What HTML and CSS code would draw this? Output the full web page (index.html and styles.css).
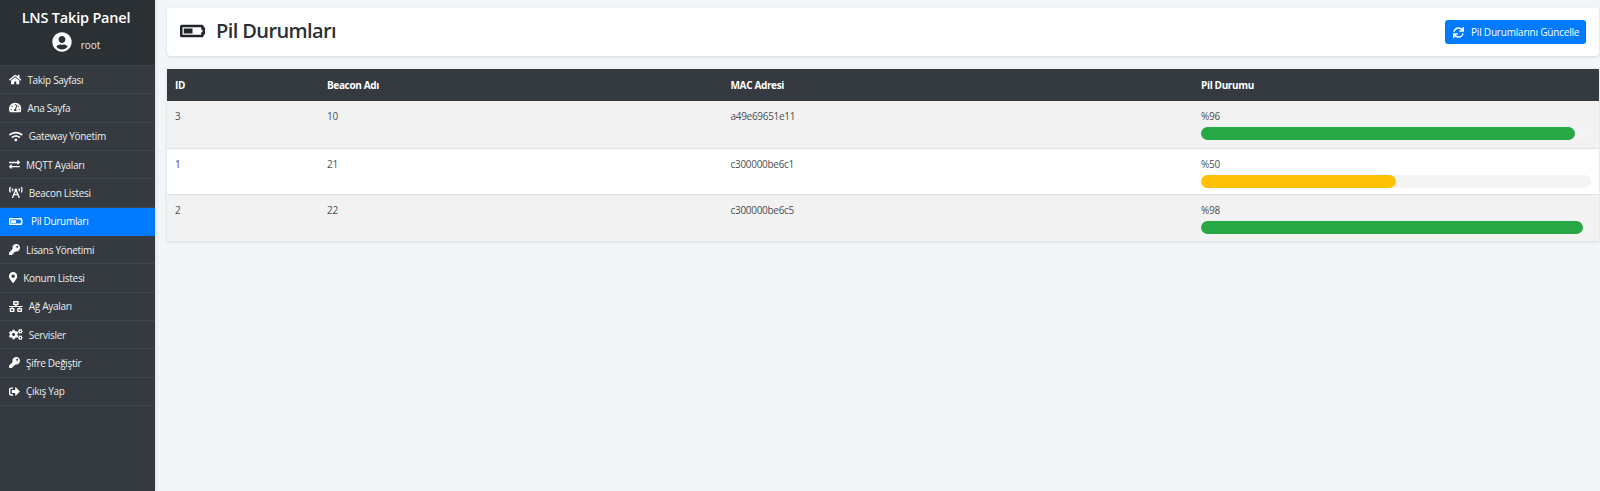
FILE: index.html
```html
<!DOCTYPE html>
<html lang="tr">
<head>
<meta charset="utf-8">
<title>Pil Durumları</title>
<link rel="stylesheet" href="styles.css">
</head>
<body>
<svg class="sprite" aria-hidden="true">
<symbol id="i-user" viewBox="0 0 496 512"><path d="M248 8C111 8 0 119 0 256s111 248 248 248 248-111 248-248S385 8 248 8zm0 96c48.6 0 88 39.4 88 88s-39.4 88-88 88-88-39.4-88-88 39.4-88 88-88zm0 344c-58.7 0-111.3-26.6-146.5-68.2 18.8-35.4 55.6-59.8 98.5-59.8 2.4 0 4.8.4 7.1 1.1 13 4.2 26.6 6.9 40.9 6.9 14.3 0 28-2.7 40.9-6.9 2.3-.7 4.7-1.1 7.1-1.1 42.9 0 79.7 24.4 98.5 59.8C359.3 421.4 306.7 448 248 448z"/></symbol>
<symbol id="i-sync" viewBox="0 0 512 512"><path d="M440.65 12.57l4 82.77A247.16 247.16 0 0 0 255.83 8C134.73 8 33.91 94.92 12.29 209.82A12 12 0 0 0 24.09 224h49.05a12 12 0 0 0 11.67-9.26 175.91 175.91 0 0 1 317-56.94l-101.46-4.86a12 12 0 0 0-12.57 12v47.41a12 12 0 0 0 12 12H500a12 12 0 0 0 12-12V12a12 12 0 0 0-12-12h-47.37a12 12 0 0 0-11.98 12.57zM255.83 432a175.61 175.61 0 0 1-146-77.8l101.8 4.87a12 12 0 0 0 12.57-12v-47.4a12 12 0 0 0-12-12H12a12 12 0 0 0-12 12V500a12 12 0 0 0 12 12h47.35a12 12 0 0 0 12-12.6l-4.15-82.57A247.17 247.17 0 0 0 255.83 504c121.11 0 221.93-86.92 243.55-201.82a12 12 0 0 0-11.8-14.18h-49.05a12 12 0 0 0-11.67 9.26A175.86 175.86 0 0 1 255.83 432z"/></symbol>
<symbol id="i-home" viewBox="0 0 576 512"><path d="M280.37 148.26L96 300.11V464a16 16 0 0 0 16 16l112.06-.29a16 16 0 0 0 15.92-16V368a16 16 0 0 1 16-16h64a16 16 0 0 1 16 16v95.64a16 16 0 0 0 16 16.05L464 480a16 16 0 0 0 16-16V300L295.67 148.26a12.19 12.19 0 0 0-15.3 0zM571.6 251.47L488 182.56V44.05a12 12 0 0 0-12-12h-56a12 12 0 0 0-12 12v72.61L318.47 43a48 48 0 0 0-61 0L4.34 251.47a12 12 0 0 0-1.6 16.9l25.5 31A12 12 0 0 0 45.15 301l235.22-193.74a12.19 12.19 0 0 1 15.3 0L530.9 301a12 12 0 0 0 16.9-1.6l25.5-31a12 12 0 0 0-1.7-16.93z"/></symbol>
<symbol id="i-gauge" viewBox="0 0 576 512"><path d="M288 32C128.94 32 0 160.94 0 320c0 52.8 14.25 102.26 39.06 144.8 5.61 9.62 16.3 15.2 27.44 15.2h443c11.14 0 21.83-5.58 27.44-15.2C561.75 422.26 576 372.8 576 320c0-159.06-128.94-288-288-288zm0 64c14.71 0 26.58 10.13 30.32 23.65-1.11 2.26-2.64 4.23-3.45 6.67l-9.22 27.67c-5.13 3.49-10.97 6.01-17.64 6.01-17.67 0-32-14.33-32-32S270.33 96 288 96zM96 384c-17.67 0-32-14.33-32-32s14.33-32 32-32 32 14.33 32 32-14.33 32-32 32zm48-160c-17.67 0-32-14.33-32-32s14.33-32 32-32 32 14.33 32 32-14.33 32-32 32zm246.77-72.41l-61.33 184C343.13 347.33 352 364.54 352 384c0 11.72-3.38 22.55-8.88 32H232.88c-5.5-9.45-8.88-20.28-8.88-32 0-33.94 26.5-61.43 59.9-63.59l61.34-184.01c4.17-12.56 17.73-19.45 30.36-15.17 12.57 4.19 19.35 17.79 15.17 30.36zm14.66 57.2l15.52-46.55c3.47-1.29 7.13-2.23 11.05-2.23 17.67 0 32 14.33 32 32s-14.33 32-32 32c-11.38-.01-20.89-6.28-26.57-15.22zM480 384c-17.67 0-32-14.33-32-32s14.33-32 32-32 32 14.33 32 32-14.33 32-32 32z"/></symbol>
<symbol id="i-wifi" viewBox="0 0 640 512"><path d="M634.91 154.88C457.74-8.99 182.19-8.93 5.09 154.88c-6.66 6.16-6.79 16.59-.35 22.98l34.24 33.97c6.14 6.1 16.02 6.23 22.4.38 145.92-133.68 371.3-133.71 517.25 0 6.38 5.85 16.26 5.71 22.4-.38l34.24-33.97c6.43-6.39 6.3-16.82-.36-22.98zM320 352c-35.35 0-64 28.65-64 64s28.65 64 64 64 64-28.65 64-64-28.65-64-64-64zm202.67-83.59c-115.26-101.93-290.21-101.82-405.34 0-6.9 6.1-7.12 16.69-.57 23.15l34.44 33.99c6 5.92 15.66 6.32 22.05.8 83.95-72.57 209.74-72.41 293.49 0 6.39 5.52 16.05 5.13 22.05-.8l34.44-33.99c6.56-6.46 6.33-17.06-.56-23.15z"/></symbol>
<symbol id="i-exchange" viewBox="0 0 512 512"><path d="M0 168v-16c0-13.255 10.745-24 24-24h360V80c0-21.367 25.899-32.042 40.971-16.971l80 80c9.372 9.373 9.372 24.569 0 33.941l-80 80C409.956 271.982 384 261.456 384 240v-48H24c-13.255 0-24-10.745-24-24zm488 152H128v-48c0-21.314-25.862-32.08-40.971-16.971l-80 80c-9.372 9.373-9.372 24.569 0 33.941l80 80C102.057 463.997 128 453.437 128 432v-48h360c13.255 0 24-10.745 24-24v-16c0-13.255-10.745-24-24-24z"/></symbol>
<symbol id="i-tower" viewBox="0 0 640 512"><path d="M150.94 192h33.73c11.01 0 18.61-10.83 14.86-21.18-4.93-13.58-7.55-27.98-7.55-42.82s2.62-29.24 7.55-42.82C203.29 74.83 195.68 64 184.67 64h-33.73c-7.01 0-13.46 4.49-15.41 11.23C130.64 92.21 128 109.88 128 128c0 18.12 2.64 35.79 7.54 52.76 1.94 6.74 8.39 11.24 15.4 11.24zM89.92 23.34C95.56 12.72 87.97 0 75.96 0H40.63c-6.27 0-12.14 3.59-14.74 9.31C9.4 45.54 0 85.65 0 128c0 24.75 3.12 68.33 26.69 118.86 2.62 5.63 8.42 9.14 14.61 9.14h34.84c12.02 0 19.61-12.74 13.95-23.37-49.78-93.32-16.71-178.15-.17-209.29zM614.06 9.29C611.46 3.58 605.6 0 599.33 0h-35.42c-11.98 0-19.66 12.66-14.02 23.25 18.27 34.29 48.42 119.42.28 209.23-5.72 10.68 1.8 23.52 13.91 23.52h35.23c6.27 0 12.13-3.58 14.73-9.29C630.57 210.48 640 170.36 640 128s-9.42-82.48-25.94-118.71zM489.06 64h-33.73c-11.01 0-18.61 10.83-14.86 21.18 4.93 13.58 7.55 27.98 7.55 42.82s-2.62 29.24-7.55 42.82c-3.76 10.35 3.85 21.18 14.86 21.18h33.73c7.02 0 13.46-4.49 15.41-11.24 4.9-16.97 7.53-34.64 7.53-52.76 0-18.12-2.64-35.79-7.54-52.76-1.94-6.75-8.39-11.24-15.4-11.24zm-116.3 100.12c7.05-10.29 11.2-22.71 11.2-36.12 0-35.35-28.63-64-63.96-64-35.32 0-63.96 28.65-63.96 64 0 13.41 4.15 25.83 11.2 36.12l-130.5 313.41c-3.4 8.15.46 17.52 8.61 20.92l29.51 12.31c8.15 3.4 17.52-.46 20.91-8.61L244.96 384h150.07l49.2 118.15c3.4 8.16 12.76 12.01 20.91 8.61l29.51-12.31c8.15-3.4 12-12.77 8.61-20.92l-130.5-313.41zM271.62 320L320 203.81 368.38 320h-96.76z"/></symbol>
<symbol id="i-battery" viewBox="0 0 640 512"><path d="M544 160v64h32v64h-32v64H64V160h480m16-64H48c-26.51 0-48 21.49-48 48v224c0 26.51 21.49 48 48 48h512c26.51 0 48-21.49 48-48v-16h8c13.255 0 24-10.745 24-24V184c0-13.255-10.745-24-24-24h-8v-16c0-26.51-21.49-48-48-48zm-240 96H96v128h224V192z"/></symbol>
<symbol id="i-key" viewBox="0 0 512 512"><path d="M512 176.001C512 273.203 433.202 352 336 352c-11.22 0-22.19-1.062-32.827-3.069l-24.012 27.014A23.999 23.999 0 0 1 261.223 384H224v40c0 13.255-10.745 24-24 24h-40v40c0 13.255-10.745 24-24 24H24c-13.255 0-24-10.745-24-24v-78.059c0-6.365 2.529-12.47 7.029-16.971l161.802-161.802C163.108 213.814 160 195.271 160 176 160 78.798 238.797.001 335.999 0 433.488-.001 512 78.511 512 176.001zM336 128c0 26.51 21.49 48 48 48s48-21.49 48-48-21.49-48-48-48-48 21.49-48 48z"/></symbol>
<symbol id="i-marker" viewBox="0 0 384 512"><path d="M172.268 501.67C26.97 291.031 0 268.413 0 192 0 85.961 85.961 0 192 0s192 85.961 192 192c0 76.413-26.97 99.031-172.268 309.67-9.535 13.774-29.93 13.773-39.464 0zM192 272c44.183 0 80-35.817 80-80s-35.817-80-80-80-80 35.817-80 80 35.817 80 80 80z"/></symbol>
<symbol id="i-network" viewBox="0 0 640 512"><path d="M640 264v-16c0-8.84-7.16-16-16-16H344v-40h72c17.67 0 32-14.33 32-32V32c0-17.67-14.33-32-32-32H224c-17.67 0-32 14.33-32 32v128c0 17.67 14.33 32 32 32h72v40H16c-8.84 0-16 7.16-16 16v16c0 8.84 7.16 16 16 16h104v40H64c-17.67 0-32 14.33-32 32v128c0 17.67 14.33 32 32 32h160c17.67 0 32-14.33 32-32V352c0-17.67-14.33-32-32-32h-56v-40h304v40h-56c-17.67 0-32 14.33-32 32v128c0 17.67 14.33 32 32 32h160c17.67 0 32-14.33 32-32V352c0-17.67-14.33-32-32-32h-56v-40h104c8.84 0 16-7.16 16-16zM256 128V64h128v64H256zm-64 320H96v-64h96v64zm352 0h-96v-64h96v64z"/></symbol>
<symbol id="i-cogs" viewBox="0 0 640 512"><path d="M512.1 191l-8.2 14.3c-3 5.3-9.4 7.5-15.1 5.4-11.8-4.4-22.6-10.7-32.1-18.6-4.6-3.8-5.8-10.5-2.8-15.7l8.2-14.3c-6.9-8-12.3-17.3-15.9-27.4h-16.5c-6 0-11.2-4.3-12.2-10.3-2-12-2.1-24.6 0-37.1 1-6 6.2-10.4 12.2-10.4h16.5c3.6-10.1 9-19.4 15.9-27.4l-8.2-14.3c-3-5.2-1.9-11.9 2.8-15.7 9.5-7.9 20.4-14.2 32.1-18.6 5.7-2.1 12.1.1 15.1 5.4l8.2 14.3c10.5-1.9 21.2-1.9 31.7 0L552 6.3c3-5.3 9.4-7.5 15.1-5.4 11.8 4.4 22.6 10.7 32.1 18.6 4.6 3.8 5.8 10.5 2.8 15.7l-8.2 14.3c6.9 8 12.3 17.3 15.9 27.4h16.5c6 0 11.2 4.3 12.2 10.3 2 12 2.1 24.6 0 37.1-1 6-6.2 10.4-12.2 10.4h-16.5c-3.6 10.1-9 19.4-15.9 27.4l8.2 14.3c3 5.2 1.9 11.9-2.8 15.7-9.5 7.9-20.4 14.2-32.1 18.6-5.7 2.1-12.1-.1-15.1-5.4l-8.2-14.3c-10.4 1.9-21.2 1.9-31.7 0zm-10.5-58.8c38.5 29.6 82.4-14.3 52.8-52.8-38.5-29.7-82.4 14.3-52.8 52.8zM386.3 286.1l33.7 16.8c10.1 5.8 14.5 18.1 10.5 29.1-8.9 24.2-26.4 46.4-42.6 65.8-7.4 8.9-20.2 11.1-30.3 5.3l-29.1-16.8c-16 13.7-34.6 24.6-54.9 31.7v33.6c0 11.6-8.3 21.6-19.7 23.6-24.6 4.2-50.4 4.4-75.9 0-11.5-2-20-11.9-20-23.6V418c-20.3-7.2-38.9-18-54.9-31.7L74 403c-10 5.8-22.9 3.6-30.3-5.3-16.2-19.4-33.3-41.6-42.2-65.7-4-10.9.4-23.2 10.5-29.1l33.3-16.8c-3.9-20.9-3.9-42.4 0-63.4L12 205.8c-10.1-5.8-14.6-18.1-10.5-29 8.9-24.2 26-46.4 42.2-65.8 7.4-8.9 20.2-11.1 30.3-5.3l29.1 16.8c16-13.7 34.6-24.6 54.9-31.7V57.1c0-11.5 8.2-21.5 19.6-23.5 24.6-4.2 50.5-4.4 76-.1 11.5 2 20 11.9 20 23.6v33.6c20.3 7.2 38.9 18 54.9 31.7l29.1-16.8c10-5.8 22.9-3.6 30.3 5.3 16.2 19.4 33.2 41.6 42.1 65.8 4 10.9.1 23.2-10 29.1l-33.7 16.8c3.9 21 3.9 42.5 0 63.5zm-117.6 21.1c59.2-77-28.7-164.9-105.7-105.7-59.2 77 28.7 164.9 105.7 105.7zm243.4 182.7l-8.2 14.3c-3 5.3-9.4 7.5-15.1 5.4-11.8-4.4-22.6-10.7-32.1-18.6-4.6-3.8-5.8-10.5-2.8-15.7l8.2-14.3c-6.9-8-12.3-17.3-15.9-27.4h-16.5c-6 0-11.2-4.3-12.2-10.3-2-12-2.1-24.6 0-37.1 1-6 6.2-10.4 12.2-10.4h16.5c3.6-10.1 9-19.4 15.9-27.4l-8.2-14.3c-3-5.2-1.9-11.9 2.8-15.7 9.5-7.9 20.4-14.2 32.1-18.6 5.7-2.1 12.1.1 15.1 5.4l8.2 14.3c10.5-1.9 21.2-1.9 31.7 0l8.2-14.3c3-5.3 9.4-7.5 15.1-5.4 11.8 4.4 22.6 10.7 32.1 18.6 4.6 3.8 5.8 10.5 2.8 15.7l-8.2 14.3c6.9 8 12.3 17.3 15.9 27.4h16.5c6 0 11.2 4.3 12.2 10.3 2 12 2.1 24.6 0 37.1-1 6-6.2 10.4-12.2 10.4h-16.5c-3.6 10.1-9 19.4-15.9 27.4l8.2 14.3c3 5.2 1.9 11.9-2.8 15.7-9.5 7.9-20.4 14.2-32.1 18.6-5.7 2.1-12.1-.1-15.1-5.4l-8.2-14.3c-10.4 1.9-21.2 1.9-31.7 0zM501.6 431c38.5 29.6 82.4-14.3 52.8-52.8-38.5-29.6-82.4 14.3-52.8 52.8z"/></symbol>
<symbol id="i-signout" viewBox="0 0 512 512"><path d="M497 273L329 441c-15 15-41 4.5-41-17v-96H152c-13.3 0-24-10.7-24-24v-96c0-13.3 10.7-24 24-24h136V88c0-21.4 25.9-32 41-17l168 168c9.3 9.4 9.3 24.6 0 34zM192 436v-40c0-6.6-5.4-12-12-12H96c-17.7 0-32-14.3-32-32V160c0-17.7 14.3-32 32-32h84c6.6 0 12-5.4 12-12V76c0-6.6-5.4-12-12-12H96c-53 0-96 43-96 96v192c0 53 43 96 96 96h84c6.6 0 12-5.4 12-12z"/></symbol>
</svg>
<div class="layout">
  <aside class="sidebar">
    <div class="brand">
      <div class="brand-title">LNS Takip Panel</div>
      <div class="brand-user">
        <svg class="user-icon"><use href="#i-user"/></svg>
        <span class="user-name">root</span>
      </div>
    </div>
    <nav class="menu">
      <a class="item"><svg class="ic w576"><use href="#i-home"/></svg><span>Takip Sayfası</span></a>
      <a class="item"><svg class="ic w576"><use href="#i-gauge"/></svg><span>Ana Sayfa</span></a>
      <a class="item"><svg class="ic w640"><use href="#i-wifi"/></svg><span>Gateway Yönetim</span></a>
      <a class="item"><svg class="ic w512"><use href="#i-exchange"/></svg><span>MQTT Ayaları</span></a>
      <a class="item"><svg class="ic w640"><use href="#i-tower"/></svg><span>Beacon Listesi</span></a>
      <a class="item active"><svg class="ic w640 gap-wide"><use href="#i-battery"/></svg><span>Pil Durumları</span></a>
      <a class="item"><svg class="ic w512"><use href="#i-key"/></svg><span>Lisans Yönetimi</span></a>
      <a class="item"><svg class="ic w384"><use href="#i-marker"/></svg><span>Konum Listesi</span></a>
      <a class="item"><svg class="ic w640"><use href="#i-network"/></svg><span>Ağ Ayaları</span></a>
      <a class="item"><svg class="ic w640"><use href="#i-cogs"/></svg><span>Servisler</span></a>
      <a class="item"><svg class="ic w512"><use href="#i-key"/></svg><span>Şifre Değiştir</span></a>
      <a class="item"><svg class="ic w512"><use href="#i-signout"/></svg><span>Çıkış Yap</span></a>
    </nav>
  </aside>
  <main class="content">
    <header class="page-head">
      <h1 class="page-title"><svg class="title-icon"><use href="#i-battery"/></svg><span>Pil Durumları</span></h1>
      <button class="btn"><svg class="btn-icon"><use href="#i-sync"/></svg><span>Pil Durumlarını Güncelle</span></button>
    </header>
    <table class="grid">
      <colgroup><col class="c1"><col class="c2"><col class="c3"><col class="c4"></colgroup>
      <thead>
        <tr><th>ID</th><th>Beacon Adı</th><th>MAC Adresi</th><th>Pil Durumu</th></tr>
      </thead>
      <tbody>
        <tr><td>3</td><td>10</td><td>a49e69651e11</td><td>%96<div class="track"><div class="fill green" style="width:96%"></div></div></td></tr>
        <tr><td>1</td><td>21</td><td>c300000be6c1</td><td>%50<div class="track"><div class="fill yellow" style="width:50%"></div></div></td></tr>
        <tr><td>2</td><td>22</td><td>c300000be6c5</td><td>%98<div class="track"><div class="fill green" style="width:98%"></div></div></td></tr>
      </tbody>
    </table>
  </main>
</div>
</body>
</html>
```
FILE: styles.css
```css
* { box-sizing: border-box; }
html, body { margin: 0; height: 100%; }
body {
  font-family: "Open Sans", "Noto Sans", "Liberation Sans", sans-serif;
  font-size: 10px;
  color: #212529;
  background: #f3f6f9;
  overflow: hidden;
}
.sprite { display: none; }
.layout { display: flex; height: 491px; }
.sidebar {
  flex: 0 0 155px;
  background: #343a40;
  color: #fff;
  box-shadow: 1px 0 3px rgba(0, 0, 0, .1);
}
.brand {
  height: 66px;
  background: #2b3035;
  padding: 8px 3px 0 0;
  text-align: center;
  border-bottom: 1px solid #3c4248;
}
.brand-title { font-size: 14.5px; font-weight: 600; line-height: 20px; letter-spacing: -.2px; }
.brand-user {
  display: flex;
  justify-content: center;
  align-items: center;
  gap: 9px;
  margin-top: 3px;
  font-size: 10px;
  color: #e6e8ea;
}
.user-name { padding-top: 7px; }
.user-icon { width: 20px; height: 20px; fill: #fff; }
.item {
  display: flex;
  align-items: center;
  height: 28.33px;
  padding-left: 9.3px;
  font-size: 10px;
  letter-spacing: -.3px;
  color: #eceeef;
  border-bottom: 1px solid #40464c;
}
.item.active { background: #007bff; color: #fff; border-bottom-color: #007bff; }
.ic { height: 11px; fill: #fff; margin-right: 5.7px; flex: none; }
.w384 { width: 8.25px; }
.w512 { width: 11px; }
.w576 { width: 12.4px; }
.w640 { width: 13.75px; }
.gap-wide { margin-right: 8px; }
.content { flex: 1; min-width: 0; padding: 8px 1px 0 12px; }
.page-head {
  display: flex;
  justify-content: space-between;
  align-items: center;
  height: 48px;
  padding: 0 13px 0 13px;
  background: #fff;
  border-radius: 4px;
  box-shadow: 0 1px 3px rgba(0, 0, 0, .12);
  margin-bottom: 13px;
}
.page-title {
  display: flex;
  align-items: center;
  margin: 0;
  padding-bottom: 3px;
  font-size: 20px;
  font-weight: 600;
  letter-spacing: -.6px;
  color: #2a2f34;
}
.title-icon { width: 25px; height: 20px; fill: #212529; margin-right: 11px; }
.btn {
  display: inline-flex;
  align-items: center;
  height: 24px;
  width: 141px;
  padding: 0 0 0 8px;
  border: 0;
  border-radius: 3px;
  background: #007bff;
  color: #fff;
  font: 10px "Open Sans", "Noto Sans", sans-serif;
  letter-spacing: -.2px;
  white-space: nowrap;
}
.btn-icon { width: 11px; height: 11px; fill: #fff; margin-right: 7px; flex: none; }
.grid {
  width: 100%;
  border-collapse: separate;
  border-spacing: 0;
  table-layout: fixed;
  box-shadow: 0 1px 3px rgba(0, 0, 0, .12);
  background: #fff;
}
.c1 { width: 152px; }
.c2 { width: 403.5px; }
.c3 { width: 470.5px; }
.grid th {
  height: 32px;
  padding: 0 8px;
  background: #343a40;
  color: #fff;
  font-size: 10px;
  font-weight: 700;
  letter-spacing: -.35px;
  text-align: left;
}
.grid td {
  height: 46.67px;
  padding: 8px 8px 0;
  font-size: 10px;
  line-height: 15px;
  letter-spacing: -.3px;
  color: #4b4f53;
  vertical-align: top;
  border-top: 1px solid #dee2e6;
}
.grid tbody tr:first-child td { border-top: 0; }
.grid tbody tr:nth-child(odd) { background: #f2f2f2; }
.track {
  height: 13px;
  margin-top: 3px;
  border-radius: 7px;
  background: #f4f4f4;
}
.fill { height: 100%; border-radius: 7px; }
.green { background: #28a745; }
.yellow { background: #ffc107; }
```
